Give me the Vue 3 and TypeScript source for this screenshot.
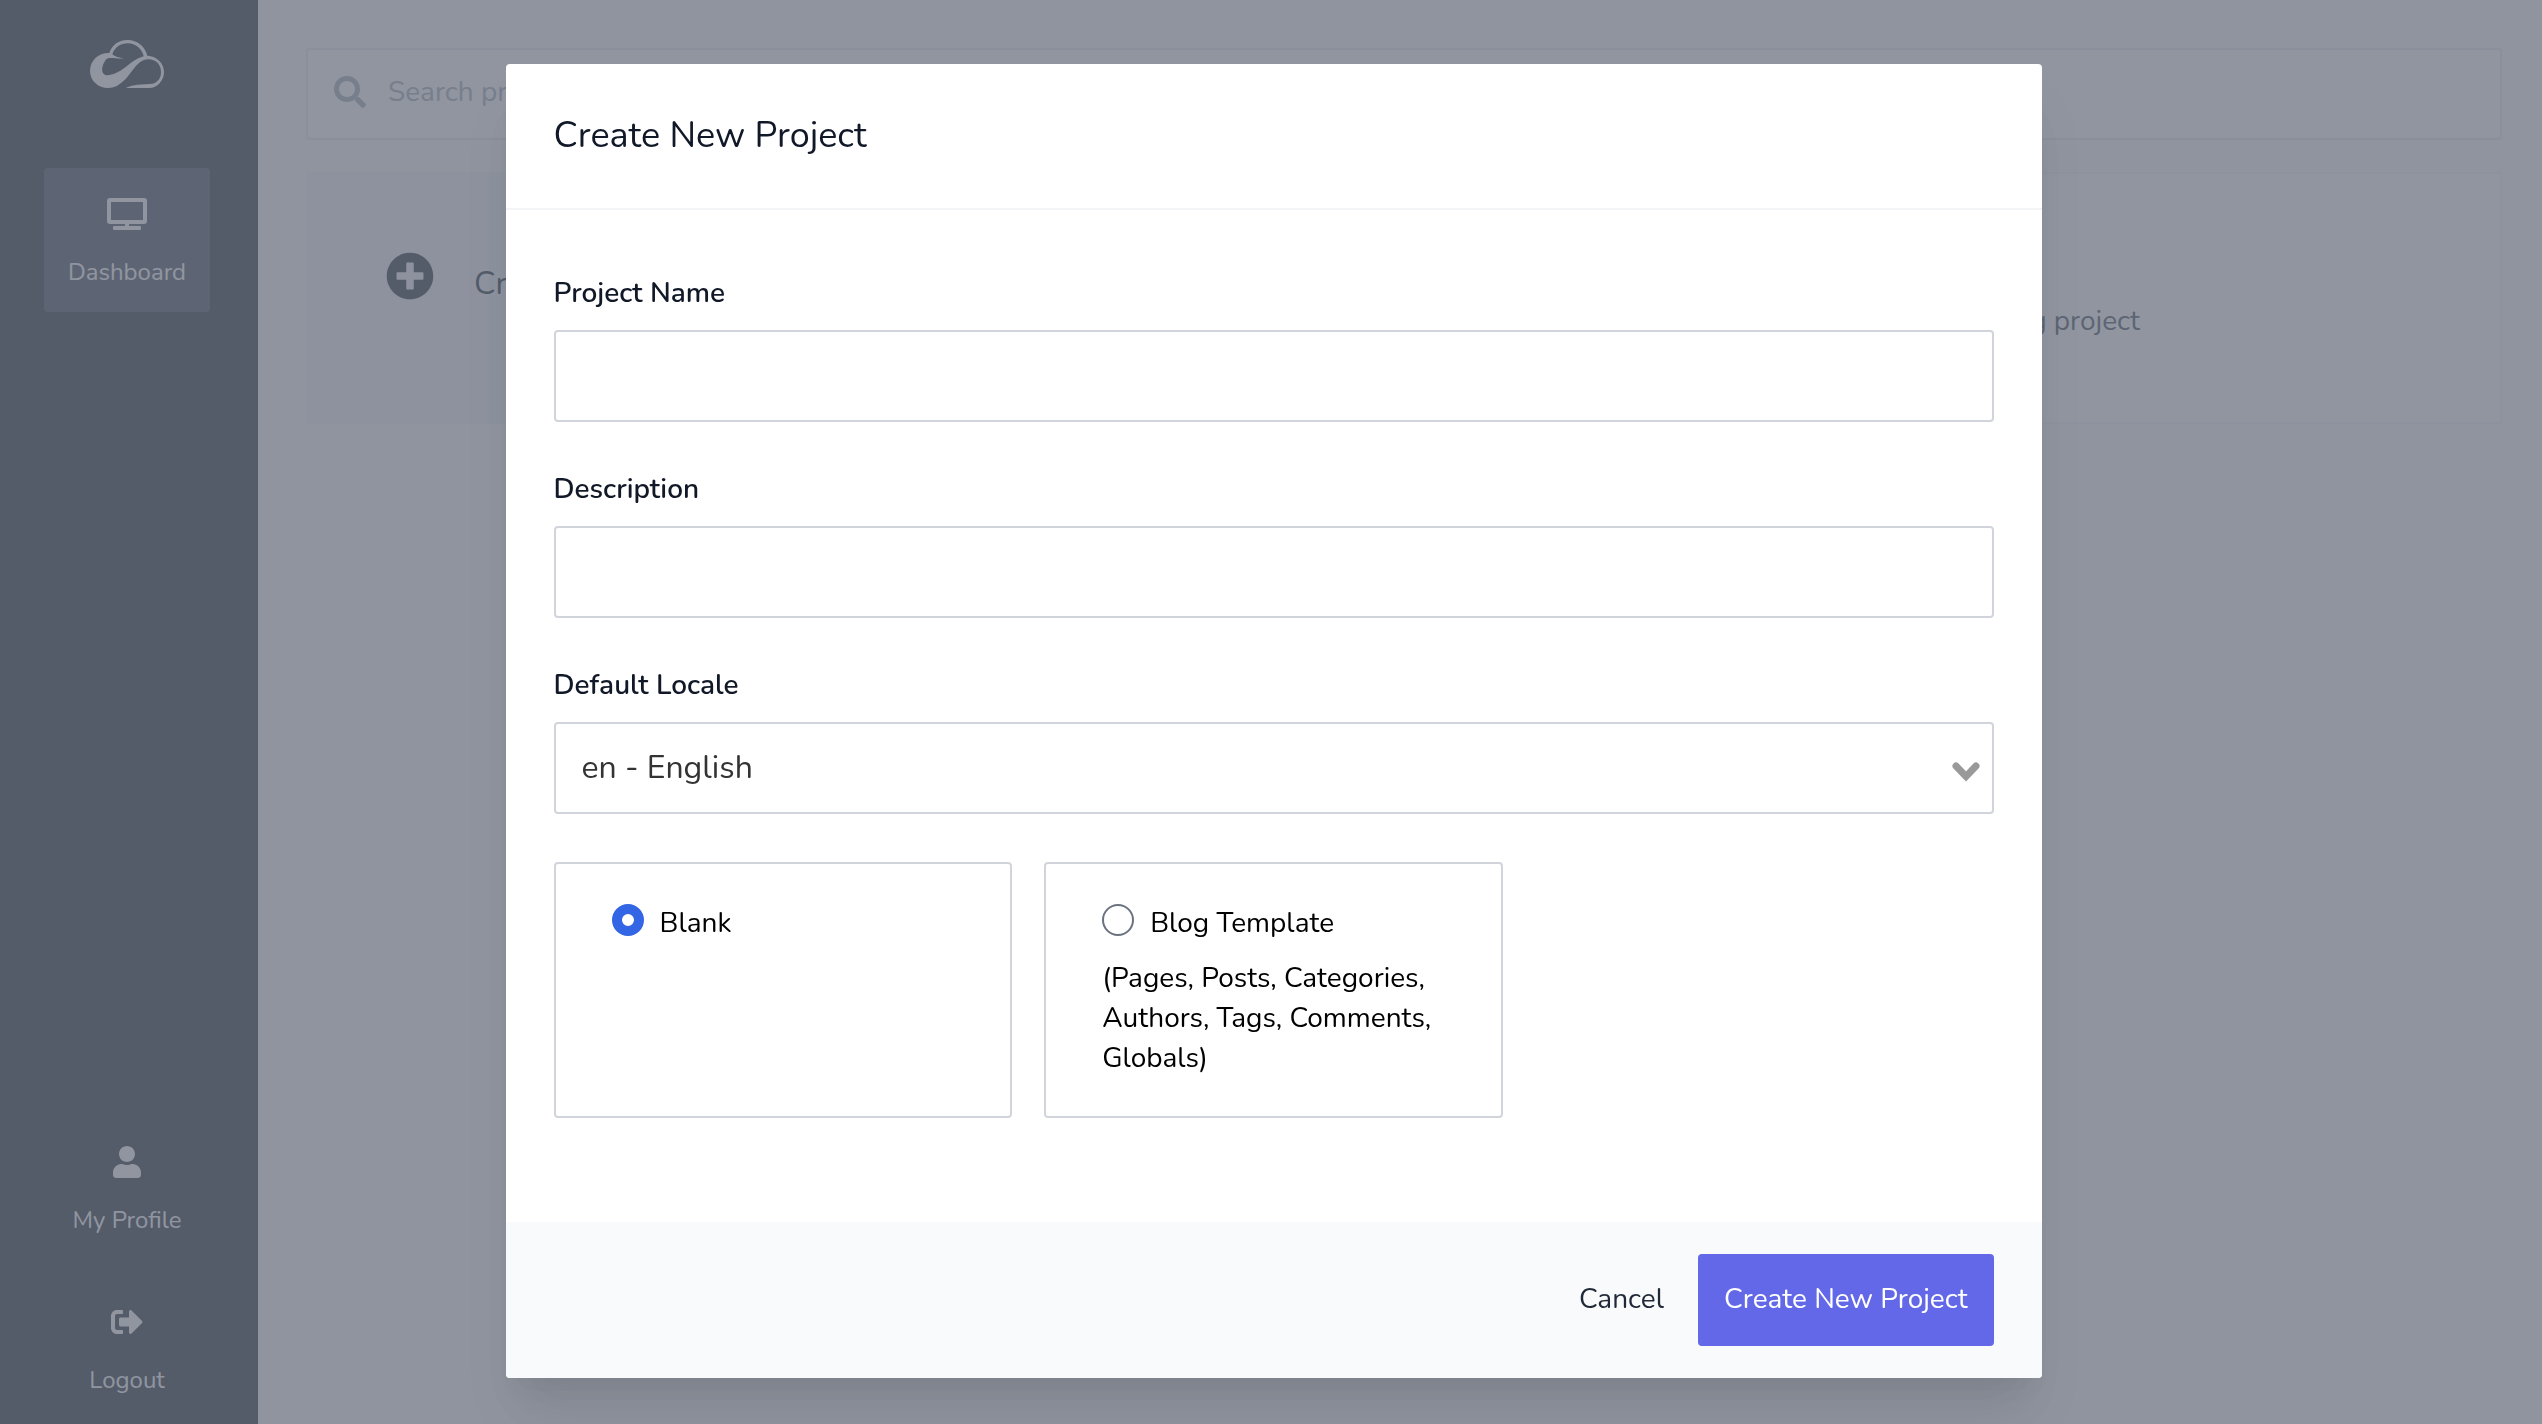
<script setup lang="ts">
import { reactive } from 'vue'

interface NavItem {
  label: string
  viewBox: string
  width: number
  path: string
  active?: boolean
}

interface ProjectTemplate {
  value: string
  label: string
  details?: string
}

const mainNav: NavItem[] = [
  {
    label: 'Dashboard',
    viewBox: '0 0 640 512',
    width: 40,
    active: true,
    path: 'M592 0H48A48 48 0 0 0 0 48v320a48 48 0 0 0 48 48h240v32H112a16 16 0 0 0-16 16v32a16 16 0 0 0 16 16h416a16 16 0 0 0 16-16v-32a16 16 0 0 0-16-16H352v-32h240a48 48 0 0 0 48-48V48a48 48 0 0 0-48-48zm-16 352H64V64h512z',
  },
]

const userNav: NavItem[] = [
  {
    label: 'My Profile',
    viewBox: '0 0 448 512',
    width: 28,
    path: 'M224 256c70.7 0 128-57.3 128-128S294.7 0 224 0 96 57.3 96 128s57.3 128 128 128zm89.6 32h-16.7c-22.2 10.2-46.9 16-72.9 16s-50.6-5.8-72.9-16h-16.7C60.2 288 0 348.2 0 422.4V464c0 26.5 21.5 48 48 48h352c26.5 0 48-21.5 48-48v-41.6c0-74.2-60.2-134.4-134.4-134.4z',
  },
  {
    label: 'Logout',
    viewBox: '0 0 512 512',
    width: 32,
    path: 'M497 273L329 441c-15 15-41 4.5-41-17v-96H152c-13.3 0-24-10.7-24-24v-96c0-13.3 10.7-24 24-24h136V88c0-21.4 25.9-32 41-17l168 168c9.3 9.4 9.3 24.6 0 34zM192 436v-40c0-6.6-5.4-12-12-12H96c-17.7 0-32-14.3-32-32V160c0-17.7 14.3-32 32-32h84c6.6 0 12-5.4 12-12V76c0-6.6-5.4-12-12-12H96c-53 0-96 43-96 96v192c0 53 43 96 96 96h84c6.6 0 12-5.4 12-12z',
  },
]

const templates: ProjectTemplate[] = [
  { value: 'blank', label: 'Blank' },
  {
    value: 'blog',
    label: 'Blog Template',
    details: '(Pages, Posts, Categories, Authors, Tags, Comments, Globals)',
  },
]

const form = reactive({ name: '', description: '', locale: 'en', template: 'blank' })
</script>

<template>
  <div class="app">
    <aside class="sidebar">
      <a class="logo" href="#" aria-label="Home">
        <svg viewBox="60 60 222 144" width="74" height="48" fill="currentColor" fill-rule="evenodd">
          <path
            d="M118 99C90 97 60 118 60 153C60 182 84 204 115 204C150 204 172 172 190 148C205 129 215 119 235 118C258 118 273 134 273 156C273 176 262 191 240 192C200 193 180 197 167 204L238 204C262 204 282 182 282 156C282 130 262 109 232 107C226 80 202 60 173 60C147 60 126 74 118 99Z M127 102C135 82 152 70 173 70C197 70 217 87 221 109C200 115 185 127 167 141C145 158 122 168 106 165C92 160 96 138 103 127C107 119 110 115 117 114C132 113 145 117 161 115C148 113 133 110 127 102Z"
          />
        </svg>
      </a>
      <nav class="nav">
        <a v-for="item in mainNav" :key="item.label" href="#" class="nav-item" :class="{ active: item.active }">
          <svg :viewBox="item.viewBox" :width="item.width" height="32" fill="currentColor"><path :d="item.path" /></svg>
          <span>{{ item.label }}</span>
        </a>
      </nav>
      <nav class="nav nav-user">
        <a v-for="item in userNav" :key="item.label" href="#" class="nav-item">
          <svg :viewBox="item.viewBox" :width="item.width" height="32" fill="currentColor"><path :d="item.path" /></svg>
          <span>{{ item.label }}</span>
        </a>
      </nav>
    </aside>

    <main class="main">
      <label class="search">
        <svg viewBox="0 0 512 512" width="32" height="32" fill="currentColor">
          <path
            d="M505 442.7L405.3 343c-4.5-4.5-10.6-7-17-7H372c27.6-35.3 44-79.7 44-128C416 93.1 322.9 0 208 0S0 93.1 0 208s93.1 208 208 208c48.3 0 92.7-16.4 128-44v16.3c0 6.4 2.5 12.5 7 17l99.7 99.7c9.4 9.4 24.6 9.4 33.9 0l28.3-28.3c9.4-9.4 9.4-24.6.1-34zM208 336c-70.7 0-128-57.2-128-128 0-70.7 57.2-128 128-128 70.7 0 128 57.2 128 128 0 70.7-57.2 128-128 128z"
          />
        </svg>
        <input type="search" placeholder="Search projects" aria-label="Search projects" />
      </label>
      <section class="start">
        <button type="button" class="start-create">
          <svg viewBox="0 0 512 512" width="48" height="48" fill="currentColor">
            <path
              d="M256 8C119 8 8 119 8 256s111 248 248 248 248-111 248-248S393 8 256 8zm144 276c0 6.6-5.4 12-12 12h-92v92c0 6.6-5.4 12-12 12h-56c-6.6 0-12-5.4-12-12v-92h-92c-6.6 0-12-5.4-12-12v-56c0-6.6 5.4-12 12-12h92v-92c0-6.6 5.4-12 12-12h56c6.6 0 12 5.4 12 12v92h92c6.6 0 12 5.4 12 12v56z"
            />
          </svg>
          <span>Create New Project</span>
        </button>
        <p class="start-hint">Or choose an existing project</p>
      </section>
    </main>

    <div class="overlay">
      <form class="modal" role="dialog" aria-modal="true" aria-labelledby="modal-title" @submit.prevent>
        <header class="modal-header">
          <h2 id="modal-title">Create New Project</h2>
        </header>
        <div class="modal-body">
          <div class="field">
            <label for="project-name">Project Name</label>
            <input id="project-name" v-model="form.name" type="text" class="control" />
          </div>
          <div class="field">
            <label for="project-description">Description</label>
            <input id="project-description" v-model="form.description" type="text" class="control" />
          </div>
          <div class="field">
            <label for="project-locale">Default Locale</label>
            <div class="select">
              <select id="project-locale" v-model="form.locale" class="control">
                <option value="en">en - English</option>
              </select>
              <svg viewBox="0 0 28 20" width="28" height="20" aria-hidden="true">
                <path d="M4 4L14 14.500L24 4" fill="none" stroke="#999" stroke-width="7" stroke-linecap="round" />
              </svg>
            </div>
          </div>
          <div class="templates" role="radiogroup" aria-label="Template">
            <label v-for="t in templates" :key="t.value" class="template">
              <span class="template-name">
                <input v-model="form.template" type="radio" name="template" :value="t.value" />
                {{ t.label }}
              </span>
              <span v-if="t.details" class="template-details">{{ t.details }}</span>
            </label>
          </div>
        </div>
        <footer class="modal-footer">
          <button type="button" class="btn">Cancel</button>
          <button type="submit" class="btn btn-primary">Create New Project</button>
        </footer>
      </form>
    </div>
  </div>
</template>

<style>
body {
  background: #f9fafb;
}
</style>

<style scoped>
.app,
.app * {
  box-sizing: border-box;
}

.app {
  display: flex;
  min-height: 100vh;
  font-family: Nunito, Lato, sans-serif;
  font-size: 28px;
  color: #111827;
}

button,
input,
select {
  font: inherit;
  color: inherit;
}

svg {
  display: block;
  flex: none;
}

.sidebar {
  display: flex;
  flex: none;
  flex-direction: column;
  width: 258px;
  padding: 40px 48px 4px 44px;
  background: #111827;
  color: #fff;
}

.logo {
  align-self: center;
  margin-bottom: 80px;
  color: inherit;
}

.nav {
  display: flex;
  flex-direction: column;
  gap: 16px;
}

.nav-user {
  margin-top: auto;
}

.nav-item {
  display: flex;
  flex-direction: column;
  align-items: center;
  gap: 24px;
  padding: 30px 0 22px;
  border-radius: 4px;
  color: inherit;
  font-size: 24px;
  line-height: 36px;
  text-decoration: none;
}

.nav-item.active {
  background: #374151;
}

.main {
  display: flex;
  flex: 1;
  flex-direction: column;
  gap: 32px;
  padding: 48px 40px 48px 48px;
}

.search {
  display: flex;
  align-items: center;
  gap: 22px;
  height: 92px;
  padding: 0 26px 4px;
  border: 2px solid #e5e7eb;
  border-radius: 4px;
  background: #fff;
  color: #9ca3af;
}

.search input {
  flex: 1;
  padding: 0;
  border: 0;
  outline: 0;
  background: none;
}

.search input::placeholder {
  color: #9ca3af;
  opacity: 1;
}

.start {
  display: grid;
  grid-template-columns: 1fr 1fr;
  border: 2px solid #f3f4f6;
  border-radius: 4px;
  background: #fff;
}

.start-create {
  display: flex;
  align-items: flex-start;
  gap: 40px;
  height: 248px;
  padding: 78px;
  border: 0;
  background: #f3f4f6;
  font-size: 32px;
  line-height: 64px;
}

.start-hint {
  margin: 0;
  padding: 46px 0 0 12px;
  align-self: center;
  color: #374151;
  text-align: center;
}

.overlay {
  position: fixed;
  inset: 0;
  display: flex;
  align-items: flex-start;
  justify-content: center;
  padding: 64px 0 46px 5px;
  overflow: auto;
  background: rgba(107, 114, 128, 0.75);
}

.modal {
  flex: 0 1 1536px;
  overflow: hidden;
  border-radius: 4px;
  background: #fff;
  box-shadow:
    0 40px 50px -10px rgba(0, 0, 0, 0.1),
    0 20px 20px -10px rgba(0, 0, 0, 0.04);
}

.modal-header {
  padding: 48px;
  border-bottom: 2px solid #f3f4f6;
}

.modal-header h2 {
  margin: 0;
  font-size: 36px;
  font-weight: 400;
  line-height: 48px;
}

.modal-body {
  display: flex;
  flex-direction: column;
  gap: 48px;
  padding: 64px 48px 104px;
}

.field {
  display: flex;
  flex-direction: column;
  gap: 18px;
}

.field label {
  font-weight: 600;
  line-height: 38px;
}

.control {
  width: 100%;
  height: 92px;
  padding: 0 26px 2px;
  border: 2px solid #d1d5db;
  border-radius: 4px;
  outline: 0;
  background: #fff;
}

.select {
  position: relative;
}

.select select {
  display: block;
  appearance: none;
  color: #333;
  font-size: 32px;
}

.select svg {
  position: absolute;
  top: 40px;
  right: 14px;
  pointer-events: none;
}

.templates {
  display: grid;
  grid-template-columns: repeat(3, 1fr);
  gap: 32px;
}

.template {
  display: flex;
  flex-direction: column;
  gap: 16px;
  min-height: 256px;
  padding: 40px 56px 38px;
  border: 2px solid #d1d5db;
  border-radius: 4px;
  color: #000;
}

.template-name {
  display: flex;
  align-items: flex-start;
  gap: 16px;
  line-height: 38px;
}

.template-details {
  line-height: 40px;
}

.template input {
  flex: none;
  width: 32px;
  height: 32px;
  margin: 0;
  appearance: none;
  border: 2px solid #6b7280;
  border-radius: 50%;
  background: #fff;
}

.template input:checked {
  border: 10px solid #3266e5;
}

.modal-footer {
  display: flex;
  align-items: center;
  justify-content: flex-end;
  gap: 8px;
  padding: 32px 48px;
  background: #f9fafb;
}

.btn {
  height: 92px;
  padding: 0 26px 2px;
  border: 0;
  border-radius: 4px;
  background: none;
  color: #1f2937;
}

.btn-primary {
  background: #6268e8;
  color: #fff;
}
</style>
